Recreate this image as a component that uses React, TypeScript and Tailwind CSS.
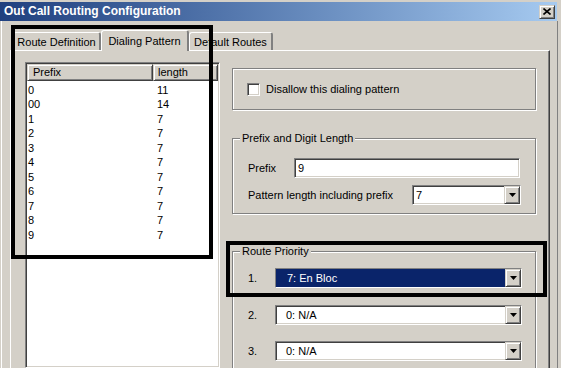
import React from 'react';

const rows: [string, string][] = [
  ['0', '11'],
  ['00', '14'],
  ['1', '7'],
  ['2', '7'],
  ['3', '7'],
  ['4', '7'],
  ['5', '7'],
  ['6', '7'],
  ['7', '7'],
  ['8', '7'],
  ['9', '7'],
];

const sunken =
  'border border-t-[#808080] border-l-[#808080] border-b-white border-r-white shadow-[inset_1px_1px_0_#404040,inset_-1px_-1px_0_#d4d0c8]';
const raised =
  'border border-t-[#d4d0c8] border-l-[#d4d0c8] border-b-[#404040] border-r-[#404040] shadow-[inset_1px_1px_0_#fff,inset_-1px_-1px_0_#808080]';
const etched = 'border border-[#808080] shadow-[inset_1px_1px_0_#fff,1px_1px_0_#fff]';

const Arrow = () => (
  <svg width="7" height="4" viewBox="0 0 7 4">
    <path d="M0 0h7L3.5 4z" fill="#000" />
  </svg>
);

const Combo: React.FC<{ value: string; selected?: boolean; className: string; textPad: string }> = ({
  value,
  selected,
  className,
  textPad,
}) => (
  <div className={`${sunken} h-[20px] flex bg-white ${className}`}>
    <div className={`flex-1 flex items-center ${textPad} ${selected ? 'bg-[#0a246a] text-white' : ''}`}>{value}</div>
    <div className={`${raised} w-[16px] bg-[#d4d0c8] flex items-center justify-center`}>
      <Arrow />
    </div>
  </div>
);

const Tab: React.FC<{ label: string; active?: boolean; w: string }> = ({ label, active, w }) =>
  active ? (
    <div className={`${w} h-[21px] -mb-px z-10 bg-[#d4d0c8] border-t border-l border-white border-r-2 border-r-[#808080] rounded-t-[3px] flex items-start justify-center pt-[4px]`}>
      {label}
    </div>
  ) : (
    <div className={`${w} h-[18px] bg-[#d4d0c8] border-t border-l border-white border-r-2 border-r-[#808080] rounded-t-[3px] flex items-start justify-center pt-[3px]`}>
      {label}
    </div>
  );

export default function App() {
  return (
    <div className="relative w-[561px] h-[368px] overflow-hidden bg-[#d4d0c8] text-black text-[11px] leading-[13px] font-['Liberation_Sans',Arial,sans-serif]">
      <div className="pt-[2px]">
        {/* title bar */}
        <div className="w-[557px] h-[19px] bg-gradient-to-r from-[#20407f] to-[#a6caf0] flex items-center justify-between pl-[4px] pr-[2px]">
          <span className="text-white font-bold text-[12px]">Out Call Routing Configuration</span>
          <div className={`${raised} w-[16px] h-[14px] bg-[#d4d0c8] flex items-center justify-center`}>
            <svg width="8" height="7" viewBox="0 0 8 7">
              <path d="M0.5 0.5L7.5 6.5M7.5 0.5L0.5 6.5" stroke="#000" strokeWidth="1.6" />
            </svg>
          </div>
        </div>

        {/* body */}
        <div className="w-[558px] h-[347px] border-r border-[#808080] pl-px">
          <div className="h-full border-l border-white pl-[8px] flex flex-col">
            {/* tabs */}
            <div className="h-[29px] shrink-0 flex items-end pl-[3px]">
              <Tab label="Route Definition" w="w-[88px]" />
              <Tab label="Dialing Pattern" active w="w-[88px]" />
              <Tab label="Default Routes" w="w-[84px]" />
            </div>

            {/* panel */}
            <div className="w-[540px] flex-1 min-h-0 overflow-hidden border-t border-l border-white border-r border-r-[#404040] shadow-[inset_-1px_0_0_#808080] flex pl-[14px]">
              {/* list view */}
              <div className={`${sunken} mt-[11px] w-[195px] bg-white p-[1px] flex flex-col`}>
                <div className="h-[17px] flex">
                  <div className={`${raised} w-[126px] bg-[#d4d0c8] pl-[5px] flex items-center`}>Prefix</div>
                  <div className={`${raised} flex-1 bg-[#d4d0c8] pl-[4px] flex items-center`}>length</div>
                </div>
                <div className="pt-[2px]">
                  {rows.map(([p, l]) => (
                    <div key={p} className="h-[14.5px] flex items-center">
                      <span className="w-[130px] pl-[1px]">{p}</span>
                      <span>{l}</span>
                    </div>
                  ))}
                </div>
              </div>

              {/* right column */}
              <div className="ml-[12px] w-[305px] pt-[17px] flex flex-col">
                <div className={`${etched} w-[304px] h-[42px] shrink-0 flex items-center pl-[14px]`}>
                  <div className={`${sunken} w-[13px] h-[13px] bg-white`} />
                  <span className="ml-[6px]">Disallow this dialing pattern</span>
                </div>

                <fieldset className={`${etched} w-[304px] mt-[22px] pb-[8px] shrink-0`}>
                  <legend className="ml-[7px] px-[2px] leading-[12px] bg-[#d4d0c8]">Prefix and Digit Length</legend>
                  <div className="mt-[14px] flex items-center pl-[15px]">
                    <span className="w-[46px]">Prefix</span>
                    <div className={`${sunken} w-[226px] h-[20px] bg-white flex items-center pl-[3px]`}>9</div>
                  </div>
                  <div className="mt-[7px] flex items-center pl-[15px]">
                    <span className="w-[164px]">Pattern length including prefix</span>
                    <Combo value="7" className="w-[109px]" textPad="pl-[3px]" />
                  </div>
                </fieldset>

                <fieldset className={`${etched} w-[304px] mt-[31px] pb-[20px] shrink-0`}>
                  <legend className="ml-[7px] px-[2px] leading-[12px] bg-[#d4d0c8]">Route Priority</legend>
                  <div className="mt-[11px] flex items-center pl-[15px]">
                    <span className="w-[27px]">1.</span>
                    <Combo value="7: En Bloc" selected className="w-[247px]" textPad="pl-[11px]" />
                  </div>
                  <div className="mt-[17px] flex items-center pl-[15px]">
                    <span className="w-[27px]">2.</span>
                    <Combo value="0: N/A" className="w-[247px]" textPad="pl-[10px]" />
                  </div>
                  <div className="mt-[16px] flex items-center pl-[15px]">
                    <span className="w-[27px]">3.</span>
                    <Combo value="0: N/A" className="w-[247px]" textPad="pl-[10px]" />
                  </div>
                </fieldset>
              </div>
            </div>
          </div>
        </div>
      </div>

      {/* annotation boxes */}
      <div className="absolute left-[11px] top-[25px] w-[202px] h-[234px] border-4 border-black pointer-events-none" />
      <div className="absolute left-[226px] top-[241px] w-[321px] h-[56px] border-4 border-black pointer-events-none" />
    </div>
  );
}
